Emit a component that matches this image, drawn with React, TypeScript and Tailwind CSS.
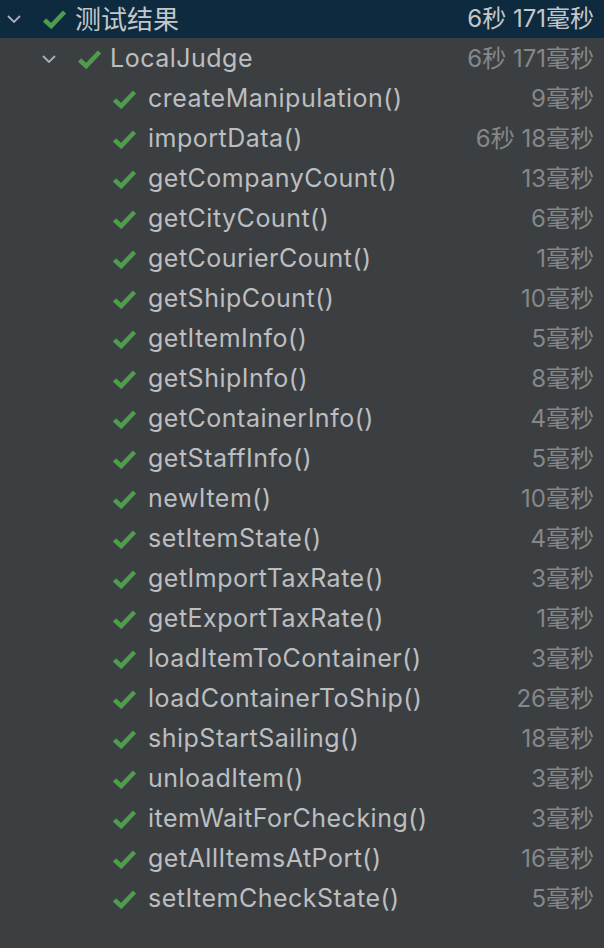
import React from 'react';

const tests: [string, string][] = [
  ['createManipulation()', '9毫秒'],
  ['importData()', '6秒 18毫秒'],
  ['getCompanyCount()', '13毫秒'],
  ['getCityCount()', '6毫秒'],
  ['getCourierCount()', '1毫秒'],
  ['getShipCount()', '10毫秒'],
  ['getItemInfo()', '5毫秒'],
  ['getShipInfo()', '8毫秒'],
  ['getContainerInfo()', '4毫秒'],
  ['getStaffInfo()', '5毫秒'],
  ['newItem()', '10毫秒'],
  ['setItemState()', '4毫秒'],
  ['getImportTaxRate()', '3毫秒'],
  ['getExportTaxRate()', '1毫秒'],
  ['loadItemToContainer()', '3毫秒'],
  ['loadContainerToShip()', '26毫秒'],
  ['shipStartSailing()', '18毫秒'],
  ['unloadItem()', '3毫秒'],
  ['itemWaitForChecking()', '3毫秒'],
  ['getAllItemsAtPort()', '16毫秒'],
  ['setItemCheckState()', '5毫秒'],
];

const Check = () => (
  <svg width="25" height="20" viewBox="0 0 25 20" className="shrink-0">
    <path d="M2.5 11 L9.2 17 L22.5 3" fill="none" stroke="#4f9d4c" strokeWidth="4.6" strokeLinecap="butt" strokeLinejoin="miter" />
  </svg>
);

const Chevron = () => (
  <svg width="16" height="10" viewBox="0 0 16 10" className="shrink-0">
    <path d="M2 2 L8 8 L14 2" fill="none" stroke="#a9b0b8" strokeWidth="1.8" />
  </svg>
);

export default function App() {
  return (
    <div
      className="w-[604px] h-[948px] bg-[#3c3f41] overflow-hidden text-[24px] text-[#bcbec0]"
      style={{ fontFamily: 'Inter, "Noto Sans CJK SC", sans-serif' }}
    >
      {/* Root row */}
      <div className="h-[38px] bg-[#0d2a3f] flex items-center pl-[6px] pr-[10px]">
        <Chevron />
        <div className="ml-[20px]"><Check /></div>
        <span className="ml-[8px] text-[26px] text-[#c4c7ca]">测试结果</span>
        <span className="ml-auto text-[#c4c7ca]">6秒 171毫秒</span>
      </div>

      {/* Suite */}
      <div className="h-[40px] flex items-center pl-[41px] pr-[10px] mt-[1px]">
        <Chevron />
        <div className="ml-[20px]"><Check /></div>
        <span className="ml-[8px] text-[25px] tracking-[0.5px]">LocalJudge</span>
        <span className="ml-auto text-[#85878a]">6秒 171毫秒</span>
      </div>

      {tests.map(([name, time]) => (
        <div key={name} className="h-[40px] flex items-center pl-[112px] pr-[10px]">
          <Check />
          <span className="ml-[11px] text-[25px] tracking-[0.5px]">{name}</span>
          <span className="ml-auto text-[#85878a]">{time}</span>
        </div>
      ))}
    </div>
  );
}
